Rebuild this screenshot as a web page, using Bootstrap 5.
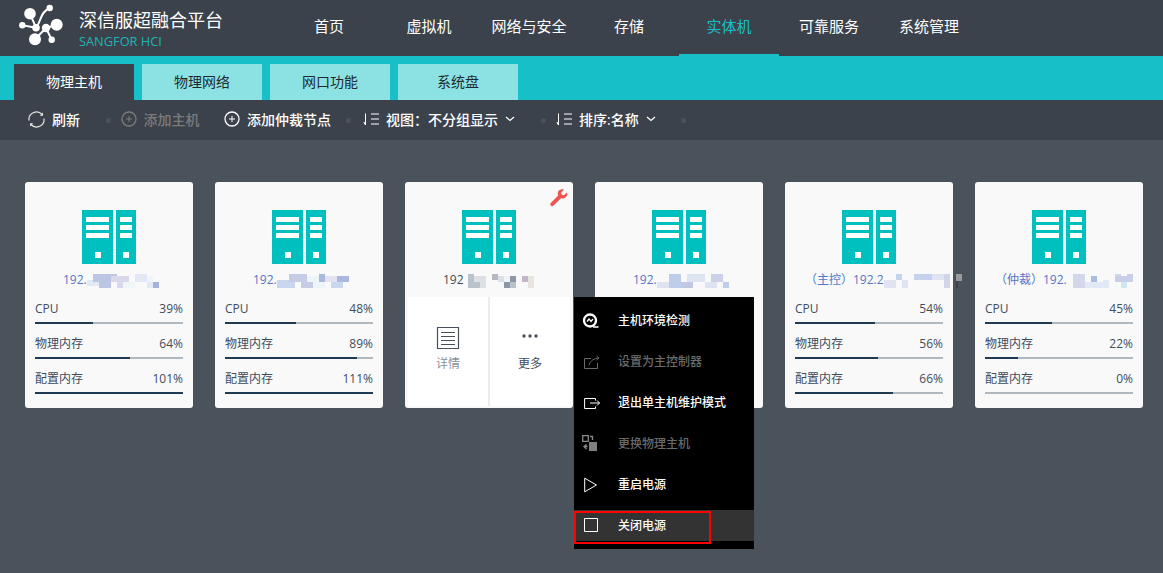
<!DOCTYPE html>
<html lang="zh">
<head>
<meta charset="utf-8">
<title>深信服超融合平台</title>
<link href="https://cdn.jsdelivr.net/npm/bootstrap@5.3.0/dist/css/bootstrap.min.css" rel="stylesheet">
<style>
html,body{height:100%;}
body{background:#4a525c;font-family:"Open Sans","Noto Sans CJK SC",sans-serif;font-size:12px;color:#3f4c5c;overflow:hidden;}
.top-head{height:56px;background:#3c424b;}
.brand-zone{width:279px;padding-left:18px;}
.brand-words{margin-left:13px;padding-top:8px;}
.brand-title{font-size:18px;line-height:24px;color:#fff;}
.brand-sub{font-size:12.8px;line-height:16px;margin-top:1px;color:#1fb3b3;font-weight:500;}
.top-link{width:100px;height:56px;line-height:53px;font-size:15px;color:#fff;text-align:center;text-decoration:none;}
.top-link.is-on{color:#17c0c8;border-bottom:2px solid #17c0c8;}
.tab-strip{height:44px;background:#17c0c8;padding:8px 0 0 14px;gap:8px;}
.tab-item{width:120px;height:36px;line-height:36px;text-align:center;font-size:14px;color:#1c2a30;background:#8ce2e2;text-decoration:none;}
.tab-item.is-on{background:#3c424b;color:#fff;}
.tool-strip{height:40px;background:#3c424b;padding:0 0 2px 28px;font-size:14px;color:#fff;font-weight:500;}
.tool-item{gap:7px;white-space:nowrap;}
.tool-off{color:#7b7b7b;}
.tool-dot{width:5px;height:5px;border-radius:50%;background:#4a525c;flex:none;margin-top:2px;}
.sp-wide{margin-left:25.5px;}
.sp-mid{margin-left:14.5px;}
.sp-narrow{margin-left:10.5px;}
.sp-add{margin-left:10px;}
.sp-add2{margin-left:24.5px;}
.sp-sort{margin-left:12.5px;}
.card-row{padding:42px 0 0 25px;gap:22px;}
.host-box{position:relative;width:168px;height:226px;background:#f9f9f9;border-radius:3px;padding:28px 10px 0;}
.srv-art{display:block;margin:0 auto;width:54px;height:54px;}
.ip-line{height:19px;margin:6px -10px 10px;padding-left:38px;line-height:19px;white-space:nowrap;color:#5676c8;}
.ip-line.is-tag{padding-left:20px;}
.ip-line.is-dark{color:#3f4c5c;}
.ip-line svg{flex:none;overflow:visible;}
.stat-row{height:35px;}
.stat-text{height:19px;line-height:19px;margin-bottom:4px;}
.stat-track{height:2px;background:#aeb8be;}
.stat-fill{height:2px;background:#1f3b53;}
.hover-pane{position:absolute;left:3px;right:3px;top:115px;height:109px;background:#fff;}
.pane-cell{flex:1;text-align:center;padding-top:29px;color:#8a8f96;}
.pane-cell:first-child{flex:none;width:80px;}
.pane-cell+.pane-cell{border-left:2px solid #ececec;color:#3f4c5c;}
.pane-art{display:block;margin:0 auto 5px;height:24px;}
.wrench{position:absolute;right:5px;top:7px;}
.ctx-menu{position:absolute;left:574px;top:297px;width:180px;height:252px;background:#000;padding-top:3px;}
.ctx-row{height:41px;padding-left:8px;gap:17px;color:#fff;font-weight:500;}
.ctx-row svg{flex:none;}
.ctx-off{color:#6a6a6a;}
.ctx-hit{position:relative;height:31px;margin-top:5px;background:#333;}
.ctx-hit::after{content:"";position:absolute;left:0;top:1px;width:137px;height:33px;border:2px solid #f00;}
</style>
</head>
<body>
<svg width="0" height="0" class="position-absolute">
  <symbol id="srv" viewBox="0 0 54 54">
    <path fill="#00bfbf" d="M0 0h31v54H0zM34 0h20v54H34z"/>
    <path fill="#fff" d="M4 7h23v5H4zM4 15h23v5H4zM4 23h23v5H4zM13 42h6v6h-6zM38 7h12v5H38zM38 15h12v5H38zM38 23h12v5H38zM41 42h6v6h-6z"/>
  </symbol>
  <symbol id="sort" viewBox="0 0 16 16">
    <path fill="none" stroke="currentColor" d="M8 3h8M8 8h8M8 13h8"/>
    <path fill="currentColor" d="M2 2.500h1V14h-1L.3 11.200h1.700z"/>
  </symbol>
  <symbol id="plus" viewBox="0 0 16 16">
    <circle cx="8" cy="8" r="7" fill="none" stroke="currentColor" stroke-width="1.300"/>
    <path stroke="currentColor" d="M8 5v6M5 8h6"/>
  </symbol>
  <symbol id="chev" viewBox="0 0 10 6">
    <path fill="none" stroke="currentColor" stroke-width="1.300" d="M1 1l4 3.500L9 1"/>
  </symbol>
</svg>

<header class="top-head d-flex">
  <div class="brand-zone d-flex">
    <svg class="mt-1" width="48" height="48" viewBox="0 0 48 48" fill="#fff" stroke="#fff">
      <path stroke-width="2" fill="none" d="M12 9.700L18 23.700M31.700 4C27 6 24 10 22 16 21 19 20 21 18 23.700M4.300 21.300L18 23.700M38.700 20.700L28 24M28 24L17 35.300M28 24L33.700 35.700"/>
      <circle cx="12" cy="9.700" r="5.800" stroke="none"/><circle cx="31.700" cy="4" r="3.200" stroke="none"/><circle cx="4.300" cy="21.300" r="3.200" stroke="none"/>
      <circle cx="38.700" cy="20.700" r="6" stroke="none"/><circle cx="18" cy="23.700" r="3.800" stroke="none"/><circle cx="28" cy="24" r="4.200" stroke="none"/>
      <circle cx="17" cy="35.300" r="6" stroke="none"/><circle cx="33.700" cy="35.700" r="3.200" stroke="none"/>
    </svg>
    <div class="brand-words"><div class="brand-title">深信服超融合平台</div><div class="brand-sub">SANGFOR HCI</div></div>
  </div>
  <nav class="d-flex">
    <a class="top-link" href="#">首页</a><a class="top-link" href="#">虚拟机</a><a class="top-link" href="#">网络与安全</a><a class="top-link" href="#">存储</a><a class="top-link is-on" href="#">实体机</a><a class="top-link" href="#">可靠服务</a><a class="top-link" href="#">系统管理</a>
  </nav>
</header>

<div class="tab-strip d-flex">
  <a class="tab-item is-on" href="#">物理主机</a><a class="tab-item" href="#">物理网络</a><a class="tab-item" href="#">网口功能</a><a class="tab-item" href="#">系统盘</a>
</div>

<div class="tool-strip d-flex align-items-center">
  <div class="tool-item d-flex align-items-center"><svg width="17" height="17" viewBox="0 0 17 17" fill="none" stroke="#e6e6e6" stroke-width="1.200"><path d="M1 9.500A7.500 7.500 0 0 1 14 3.500M16 7.500A7.500 7.500 0 0 1 3 13.500"/><path fill="#e6e6e6" stroke="none" d="M15 1.500v3.200h-3.200zM2 15.500v-3.200h3.200z"/></svg>刷新</div>
  <span class="tool-dot sp-wide"></span>
  <div class="tool-item tool-off d-flex align-items-center sp-add"><svg width="16" height="16"><use href="#plus"/></svg>添加主机</div>
  <div class="tool-item d-flex align-items-center sp-add2"><svg width="16" height="16"><use href="#plus"/></svg>添加仲裁节点</div>
  <span class="tool-dot sp-mid"></span>
  <div class="tool-item d-flex align-items-center sp-sort"><svg width="16" height="16"><use href="#sort"/></svg>视图：不分组显示<svg width="10" height="6"><use href="#chev"/></svg></div>
  <span class="tool-dot sp-wide"></span>
  <div class="tool-item d-flex align-items-center sp-narrow"><svg width="16" height="16"><use href="#sort"/></svg>排序:名称<svg width="10" height="6"><use href="#chev"/></svg></div>
  <span class="tool-dot sp-wide"></span>
</div>

<main class="card-row d-flex">
  <section class="host-box">
    <svg class="srv-art"><use href="#srv"/></svg>
    <div class="ip-line d-flex"><span>192.</span><svg width="72" height="14" class="mt-1"><path fill="#e2e8f4" d="M0 6h12v6H0zM48 0h12v8H48zM60 8h6v6h-6z"/><path fill="#bcc6e4" d="M6 0h24v8H6zM12 8h12v6H12z"/><path fill="#d8d8ea" d="M24 2h18v6H24zM30 8h6v6h-6z"/><path fill="#eef6f8" d="M36 8h12v6H36zM60 2h6v6h-6z"/><path fill="#a6b0da" d="M66 8h6v6h-6z"/></svg></div>
    <div class="stat-row"><div class="stat-text d-flex justify-content-between"><span>CPU</span><span>39%</span></div><div class="stat-track"><div class="stat-fill" style="width:39%"></div></div></div>
    <div class="stat-row"><div class="stat-text d-flex justify-content-between"><span>物理内存</span><span>64%</span></div><div class="stat-track"><div class="stat-fill" style="width:64%"></div></div></div>
    <div class="stat-row"><div class="stat-text d-flex justify-content-between"><span>配置内存</span><span>101%</span></div><div class="stat-track"><div class="stat-fill" style="width:100%"></div></div></div>
  </section>
  <section class="host-box">
    <svg class="srv-art"><use href="#srv"/></svg>
    <div class="ip-line d-flex"><span>192.</span><svg width="72" height="14" class="mt-1"><path fill="#c8d6ee" d="M0 6h18v8H0zM54 8h12v6H54z"/><path fill="#c6cbe6" d="M12 0h18v8H12zM24 8h12v6H24z"/><path fill="#eef5f8" d="M30 2h12v6H30zM36 8h12v6H36z"/><path fill="#aab8e0" d="M42 0h6v8h-6zM60 2h12v6H60z"/><path fill="#e3e3f0" d="M48 2h12v6H48z"/></svg></div>
    <div class="stat-row"><div class="stat-text d-flex justify-content-between"><span>CPU</span><span>48%</span></div><div class="stat-track"><div class="stat-fill" style="width:48%"></div></div></div>
    <div class="stat-row"><div class="stat-text d-flex justify-content-between"><span>物理内存</span><span>89%</span></div><div class="stat-track"><div class="stat-fill" style="width:89%"></div></div></div>
    <div class="stat-row"><div class="stat-text d-flex justify-content-between"><span>配置内存</span><span>111%</span></div><div class="stat-track"><div class="stat-fill" style="width:100%"></div></div></div>
  </section>
  <section class="host-box">
    <svg class="wrench" width="18" height="18" viewBox="0 0 18 18"><path fill="#ee5550" d="M17 3.500l-3 2.800-2.300-.6-.6-2.300L14 .6C11.500-.3 8.500.8 7.900 3.500c-.3 1.100-.1 2.200.3 3.100L1 13.800c-1 1-.9 2.100-.2 2.800s1.900.8 2.800-.2L11 9.200c2.600.9 5.300-.3 6.100-2.900.3-.9.200-1.900-.1-2.800z"/></svg>
    <svg class="srv-art"><use href="#srv"/></svg>
    <div class="ip-line is-dark d-flex"><span>192</span><svg width="72" height="14" class="mt-1 ms-1"><path fill="#bcc2cc" d="M0 0h6v14H0zM6 8h6v6H6z"/><path fill="#dcdfe4" d="M6 2h12v6H6zM12 8h6v6h-6zM30 2h6v6h-6z"/><path fill="#b5b8bd" d="M24 0h6v6h-6z"/><path fill="#8d96a8" d="M36 8h6v6h-6zM42 2h6v6h-6z"/><path fill="#c4b6c6" d="M54 2h6v6h-6z"/><path fill="#b8c2c8" d="M42 8h6v6h-6z"/><path fill="#e8e4e0" d="M60 2h6v12h-6z"/><path fill="#eef3f6" d="M36 2h6v6h-6z"/></svg></div>
    <div class="stat-row"></div>
    <div class="hover-pane d-flex">
      <div class="pane-cell"><svg class="pane-art" width="24" height="24" viewBox="0 0 24 24" fill="none" stroke="#47505c"><path stroke-width="1.200" d="M1.500 1.500h21v21h-21z"/><path d="M5 6.500h14M5 10.500h14M5 14.500h14M5 18.500h14"/></svg>详情</div>
      <div class="pane-cell"><svg class="pane-art" width="24" height="24" viewBox="0 0 24 24" fill="#47505c"><circle cx="6" cy="10" r="1.700"/><circle cx="12" cy="10" r="1.700"/><circle cx="18" cy="10" r="1.700"/></svg>更多</div>
    </div>
  </section>
  <section class="host-box">
    <svg class="srv-art"><use href="#srv"/></svg>
    <div class="ip-line d-flex"><span>192.</span><svg width="72" height="14" class="mt-1"><path fill="#c0cdea" d="M12 0h12v14H12zM66 8h6v6h-6z"/><path fill="#dfe4f3" d="M0 8h12v6H0zM30 0h18v8H30zM48 8h12v6H48z"/><path fill="#ccd0e8" d="M54 0h12v8H54z"/><path fill="#c0c8e4" d="M24 8h12v6H24z"/></svg></div>
    <div class="stat-row"></div>
  </section>
  <section class="host-box">
    <svg class="srv-art"><use href="#srv"/></svg>
    <div class="ip-line is-tag d-flex"><span>（主控）192.2</span><svg width="78" height="14" class="mt-1"><path fill="#c4d2ec" d="M12 0h6v6h-6zM30 0h18v6H30z"/><path fill="#e0e3f2" d="M0 6h12v8H0zM18 6h6v8h-6zM48 0h12v6H48z"/><path fill="#d2d4e8" d="M60 0h6v14h-6z"/><path fill="#999" d="M72 0h6v7h-6z"/><path fill="#3c424b" d="M72 7h2v7h-2z"/></svg></div>
    <div class="stat-row"><div class="stat-text d-flex justify-content-between"><span>CPU</span><span>54%</span></div><div class="stat-track"><div class="stat-fill" style="width:54%"></div></div></div>
    <div class="stat-row"><div class="stat-text d-flex justify-content-between"><span>物理内存</span><span>56%</span></div><div class="stat-track"><div class="stat-fill" style="width:56%"></div></div></div>
    <div class="stat-row"><div class="stat-text d-flex justify-content-between"><span>配置内存</span><span>66%</span></div><div class="stat-track"><div class="stat-fill" style="width:66%"></div></div></div>
  </section>
  <section class="host-box">
    <svg class="srv-art"><use href="#srv"/></svg>
    <div class="ip-line is-tag d-flex"><span>（仲裁）192.</span><svg width="72" height="14" class="mt-1"><path fill="#d4d6ea" d="M6 0h12v14H6zM48 0h6v8h-6z"/><path fill="#a9bde2" d="M24 2h6v8h-6z"/><path fill="#c9cfe8" d="M48 2h12v6H48zM60 0h6v8h-6z"/><path fill="#e3e8f5" d="M18 8h18v6H18zM36 6h6v8h-6z"/><path fill="#cde6f0" d="M54 8h6v6h-6z"/></svg></div>
    <div class="stat-row"><div class="stat-text d-flex justify-content-between"><span>CPU</span><span>45%</span></div><div class="stat-track"><div class="stat-fill" style="width:45%"></div></div></div>
    <div class="stat-row"><div class="stat-text d-flex justify-content-between"><span>物理内存</span><span>22%</span></div><div class="stat-track"><div class="stat-fill" style="width:22%"></div></div></div>
    <div class="stat-row"><div class="stat-text d-flex justify-content-between"><span>配置内存</span><span>0%</span></div><div class="stat-track"><div class="stat-fill" style="width:0%"></div></div></div>
  </section>
</main>

<aside class="ctx-menu">
  <div class="ctx-row d-flex align-items-center"><svg width="19" height="17" viewBox="0 0 19 17" fill="none" stroke="#fff"><circle cx="8" cy="8.500" r="6" stroke-width="2.300"/><path stroke-width="1.300" d="M5 9.500l2-2.500 2 2.500 2-2.500M11 15h5.500"/></svg>主机环境检测</div>
  <div class="ctx-row ctx-off d-flex align-items-center"><svg width="19" height="17" viewBox="-2 0 19 17" fill="none" stroke="currentColor"><path d="M7 5.500H.5v10h13V10M5 12c1-3 3-6 9-7M12.500 3L15 5l-2.500 2"/></svg>设置为主控制器</div>
  <div class="ctx-row d-flex align-items-center"><svg width="19" height="17" viewBox="-2 0 19 17" fill="none" stroke="#fff"><path d="M11.500 6.500V4.500H.6v10h10.900V12.500M6 9h9.500M13 6.500L15.500 9 13 11.500"/></svg>退出单主机维护模式</div>
  <div class="ctx-row ctx-off d-flex align-items-center"><svg width="19" height="17" viewBox="0 0 19 17"><path fill="#808080" d="M7 7h8v9H7z"/><path fill="none" stroke="#8a8a8a" stroke-width="1.300" d="M.7.700h5.600v5.600H.7zM8 1.500h2.500V5M4.500 9.500L2 11.500 4.500 14M2 11.500h3.500"/></svg>更换物理主机</div>
  <div class="ctx-row d-flex align-items-center"><svg width="19" height="17" viewBox="-2 0 19 17" fill="none" stroke="#fff"><path d="M.7 2.200v13.600l11.800-6.800z"/></svg>重启电源</div>
  <div class="ctx-row ctx-hit d-flex align-items-center"><svg width="19" height="17" viewBox="-2 0 19 17" fill="none" stroke="#fff"><path d="M.5 1.500h13v13H.5z"/></svg>关闭电源</div>
</aside>
<script src="https://cdn.jsdelivr.net/npm/bootstrap@5.3.0/dist/js/bootstrap.bundle.min.js"></script>
</body>
</html>
